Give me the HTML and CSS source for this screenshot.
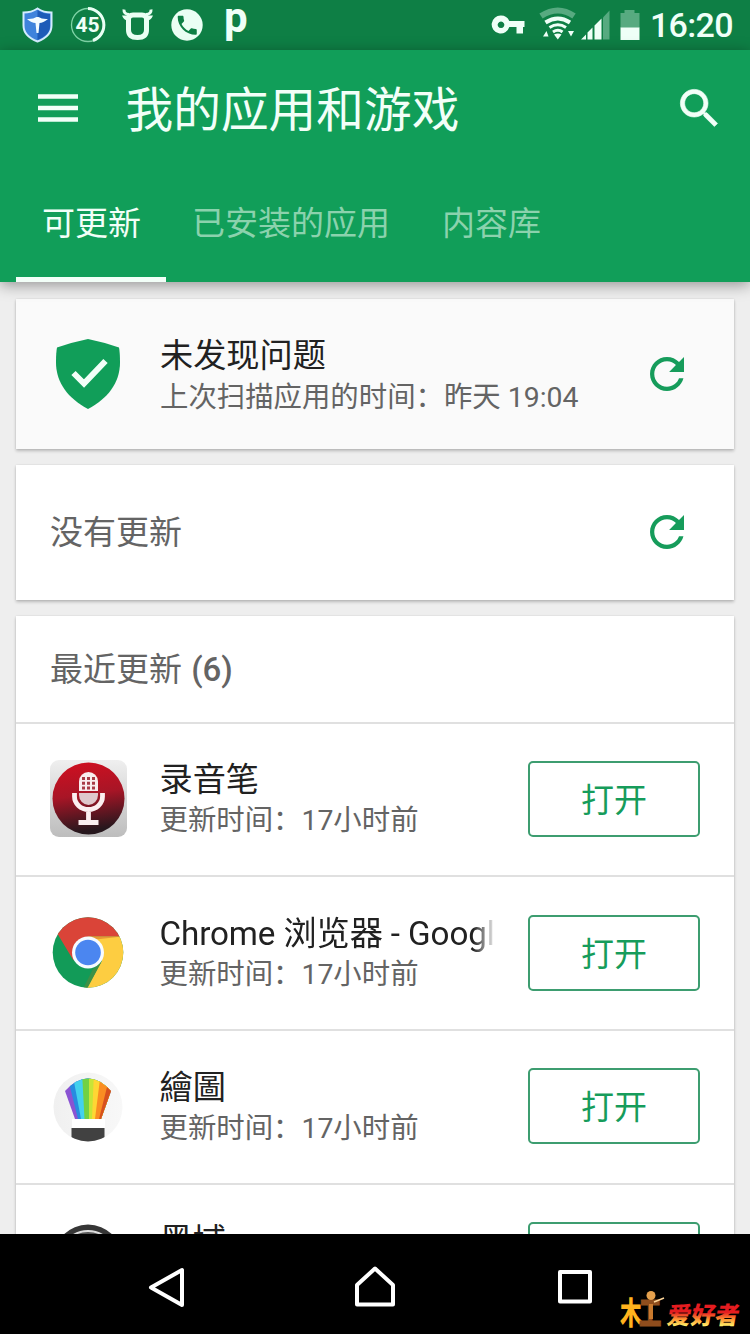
FILE: index.html
```html
<!DOCTYPE html>
<html lang="zh-CN">
<head>
<meta charset="utf-8">
<title>我的应用和游戏</title>
<link rel="stylesheet" href="styles.css">
</head>
<body>
<div class="screen">
  <div class="status">
    <svg width="46" height="50" viewBox="16 0 46 50">
      <path d="M37.500 8.500q6 4 14 4v13c0 8-6 13-14 16c-8-3-14-8-14-16v-13q8 0 14-4z" fill="#3f83dc" stroke="#d3ecff" stroke-width="2"/>
      <path d="M37.500 10v30c7-3 12.500-7 12.500-14v-12q-7 0-12.500-4z" fill="#1d5bb8"/>
      <path d="M27 19q6 .5 9.500-2h2q3.500 2.500 9.500 2q-5 4-8.500 4l-1 10h-2l-1-10q-4 0-8.500-4z" fill="#f2fbff"/>
    </svg>
    <svg width="50" height="50" viewBox="62 0 50 50">
      <circle cx="88" cy="25" r="16.500" fill="none" stroke="#7fd3a6" stroke-width="1.300"/>
      <path d="M88 8.500a16.500 16.500 0 0 1 5 32" fill="none" stroke="#e9fff4" stroke-width="3"/>
      <text x="87.500" y="32" text-anchor="middle" class="badge-num">45</text>
    </svg>
    <svg width="50" height="50" viewBox="112 0 50 50">
      <path d="M133 15h9q4.500 0 4.500 4v11c0 5-3 7.500-9 7.500s-9-2.500-9-7.500v-11q0-4 4.500-4z" fill="none" stroke="#eafff4" stroke-width="5"/>
      <path d="M124 9.500q-.5 4.500 5 5M151 9.500q.5 4.500-5 5" fill="none" stroke="#eafff4" stroke-width="3"/>
      <path d="M122 15.500l6 0v5q-4 0-6-5zM153 15.500l-6 0v5q4 0 6-5z" fill="#eafff4"/>
    </svg>
    <svg width="50" height="50" viewBox="162 0 50 50">
      <circle cx="187" cy="25" r="15.700" fill="#eafff4"/>
      <g transform="translate(174.500 12.500) scale(1.060)"><path d="M6.620 10.790c1.440 2.830 3.760 5.140 6.590 6.590l2.200-2.200c.27-.27.670-.36 1.020-.24 1.120.37 2.330.57 3.570.57.550 0 1 .45 1 1V20c0 .55-.45 1-1 1-9.390 0-17-7.610-17-17 0-.55.450-1 1-1h3.500c.55 0 1 .45 1 1 0 1.250.2 2.450.57 3.570.11.350.03.740-.25 1.020z" fill="#0e7f45"/></g>
    </svg>
    <svg width="44" height="50" viewBox="212 0 44 50"><text x="224" y="32" class="p-mark">p</text></svg>
    <svg class="signals" width="162" height="50" viewBox="486 0 162 50">
      <path fill-rule="evenodd" d="M501 15.500a9 9 0 0 1 8.300 5.500h15.200v6h-1.500v6.500h-6.500v-6.500h-7.200a9 9 0 1 1-8.300-11.500zM501 21.500a3.300 3.300 0 1 0 .01 0z" fill="#effff7"/>
      <g fill="none" stroke="#effff7">
        <path d="M541 16q17-11 33 0" stroke="#57aa80" stroke-width="6"/>
        <path d="M545.500 22.500q12.500-8 24.500 0" stroke-width="4"/>
        <path d="M549.500 27.500q8.500-5.500 16.500 0" stroke-width="3"/>
        <path d="M553 32q5-3.500 9.500 0" stroke-width="3"/>
      </g>
      <path d="M554 34.500q4-2 7.500 0l-3.700 5zM543 36.500l3.500-5.500 2 5.500zM568 31h6l-3 5.500z" fill="#effff7"/>
      <path d="M581 39.500l5-5v5zM587.500 39.500v-7l5-5v12zM594.500 39.500v-14l7-7v21z" fill="#effff7"/>
      <path d="M603 39.500h6.500v-29l-6.500 7z" fill="#57aa80"/>
      <path d="M620.500 28v-15h4v-3h10v3h5v15z" fill="#57aa80"/><path d="M620.500 27.500h19v12.500h-19z" fill="#effff7"/>
    </svg>
    <span class="clock">16:20</span>
  </div>
  <header class="header">
    <div class="bar">
      <svg class="menu" width="40" height="28" viewBox="0 0 40 28"><path d="M0 2.500h40M0 14h40M0 25.500h40" stroke="#f2fff8" stroke-width="4.500"/></svg>
      <h1 class="title">我的应用和游戏</h1>
      <svg width="51" height="51" viewBox="0 0 24 24"><path fill="#f2fff8" stroke="#f2fff8" stroke-width=".3" d="M15.500 14h-.79l-.28-.27C15.410 12.590 16 11.110 16 9.500 16 5.910 13.090 3 9.500 3S3 5.910 3 9.500 5.910 16 9.500 16c1.610 0 3.090-.59 4.230-1.570l.27.28v.79l5 4.990L20.490 19l-4.990-5zm-6 0C7.010 14 5 11.990 5 9.500S7.010 5 9.500 5 14 7.010 14 9.500 11.990 14 9.500 14z"/></svg>
    </div>
    <nav class="tabs">
      <span class="tab tab-active">可更新</span><span class="tab">已安装的应用</span><span class="tab">内容库</span>
    </nav>
  </header>
  <main class="content">
    <section class="card scan">
      <svg class="shield" width="64" height="70" viewBox="0 0 64 70"><path d="M32 0q15 3 31 8.500q1 5 1 15c0 20-12 36-32 46.500c-20-10.500-32-26.500-32-46.500q0-10 1-15q16-5.500 31-8.500z" fill="#119e59"/><path d="M17.500 34l10.500 10.500L49.500 22" fill="none" stroke="#f2fff8" stroke-width="6"/></svg>
      <div class="info">
        <div class="name">未发现问题</div>
        <div class="sub">上次扫描应用的时间：昨天 19:04</div>
      </div>
      <svg class="refresh" width="34" height="34" viewBox="4 4 16 16"><path fill="#169c5b" d="M17.650 6.350C16.200 4.900 14.210 4 12 4c-4.420 0-7.990 3.580-7.990 8s3.570 8 7.990 8c3.730 0 6.840-2.550 7.730-6h-2.080c-.82 2.330-3.040 4-5.650 4-3.310 0-6-2.690-6-6s2.690-6 6-6c1.660 0 3.140.69 4.220 1.780L13 11h7V4l-2.350 2.350z"/></svg>
    </section>
    <section class="card none">
      <div class="label">没有更新</div>
      <svg class="refresh" width="34" height="34" viewBox="4 4 16 16"><path fill="#169c5b" d="M17.650 6.350C16.200 4.900 14.210 4 12 4c-4.420 0-7.990 3.580-7.990 8s3.570 8 7.990 8c3.730 0 6.840-2.550 7.730-6h-2.080c-.82 2.330-3.040 4-5.650 4-3.310 0-6-2.690-6-6s2.690-6 6-6c1.660 0 3.140.69 4.220 1.780L13 11h7V4l-2.350 2.350z"/></svg>
    </section>
    <section class="card recent">
      <div class="heading label">最近更新 <span class="count">(6)</span></div>
      <div class="app">
        <svg class="icon" width="77" height="77" viewBox="0 0 77 77">
          <defs>
            <linearGradient id="plate" x2="0" y2="1"><stop stop-color="#efefef"/><stop offset="1" stop-color="#bdbdbd"/></linearGradient>
            <linearGradient id="disc" x2="0.150" y2="1"><stop stop-color="#d20f20"/><stop offset=".5" stop-color="#a81526"/><stop offset="1" stop-color="#26171d"/></linearGradient>
          </defs>
          <rect width="77" height="77" rx="9" fill="url(#plate)"/>
          <circle cx="38.500" cy="38.500" r="36" fill="url(#disc)"/>
          <path d="M29 31v-9.500a9.500 9.500 0 0 1 19 0v9.500z" fill="#f9ecee"/>
          <path d="M29 33h19v2a9.500 10 0 0 1-19 0z" fill="#dfc7cb"/>
          <path d="M24.500 33v3.500a14 13 0 0 0 28 0v-3.500M38.500 50v12" fill="none" stroke="#fbeff0" stroke-width="4.800"/>
          <path d="M28.500 60h20v5h-20z" fill="#fbeff0"/>
          <path d="M33.500 17v12.500M38.500 17v12.500M43.500 17v12.500" stroke="#a83a46" stroke-width="3" stroke-dasharray="3 1.800"/>
        </svg>
        <div class="info"><div class="name">录音笔</div><div class="sub">更新时间：17小时前</div></div>
        <button class="open">打开</button>
      </div>
      <div class="app">
        <svg class="icon" width="77" height="77" viewBox="0 0 77 77">
          <clipPath id="round"><circle cx="38" cy="38.500" r="35.300"/></clipPath>
          <g clip-path="url(#round)">
            <path d="M0 0h77v77h-77z" fill="#129b58"/>
            <path d="M38 22.500h39v55h-42l17-31z" fill="#fdcd41"/>
            <path d="M52.200 46.500l-15.500 29h-4l10-20z" fill="#3d9146"/>
            <path d="M0 0h77v22.500h-39l-14.500 24-18-30z" fill="#da4438"/>
            <path d="M38 22.500h34l-26 3z" fill="#e79a35"/>
          </g>
          <circle cx="38" cy="38.500" r="16" fill="#f7fbff"/><circle cx="38" cy="38.500" r="12.800" fill="#4b86f0"/>
        </svg>
        <div class="info"><div class="name name-fade">Chrome 浏览器 - Googl</div><div class="sub">更新时间：17小时前</div></div>
        <button class="open">打开</button>
      </div>
      <div class="app">
        <svg class="icon" width="77" height="77" viewBox="0 -3 77 77">
          <defs><linearGradient id="pale"><stop stop-color="#f0f0f0"/><stop offset="1" stop-color="#f8f8f8"/></linearGradient>
          <clipPath id="fan"><path d="M15 20Q38-5 61 20l-10 28h-26z"/></clipPath>
          <clipPath id="pot"><circle cx="38" cy="36" r="34.500"/></clipPath></defs>
          <circle cx="38" cy="36" r="34.500" fill="url(#pale)"/>
          <g clip-path="url(#fan)">
            <path d="M13 0h50v48h-50z" fill="#8a53d2"/>
            <path d="M17 4L28 48h30V0h-40z" fill="#288be0"/>
            <path d="M22 0L31 48h30V0z" fill="#43d1ed"/>
            <path d="M32 0L34.500 48H60V0z" fill="#71d143"/>
            <path d="M39 0V48H60V0z" fill="#c8e437"/>
            <path d="M44 0L42 48H60V0z" fill="#ffd634"/>
            <path d="M51 0L45 48H62V0z" fill="#fa8d22"/>
            <path d="M59 8L49 48H64V0z" fill="#d7501e"/>
          </g>
          <path d="M22 48h33v9h-33z" fill="#fff"/>
          <path clip-path="url(#pot)" d="M21.500 57h33v14h-33z" fill="#414141"/>
        </svg>
        <div class="info"><div class="name">繪圖</div><div class="sub">更新时间：17小时前</div></div>
        <button class="open">打开</button>
      </div>
      <div class="app">
        <svg class="icon" width="77" height="77" viewBox="0 0 77 77"><circle cx="38" cy="38" r="34.500" fill="#363636"/><circle cx="38" cy="38" r="28" fill="#555" stroke="#ddd" stroke-width="2"/></svg>
        <div class="info"><div class="name">黑域</div><div class="sub">更新时间：17小时前</div></div>
        <button class="open">打开</button>
      </div>
    </section>
  </main>
  <footer class="nav">
    <svg width="40" height="44" viewBox="0 0 40 44"><path d="M35 5v35L4 22.500z" fill="none" stroke="#fff" stroke-width="4" stroke-linejoin="round"/></svg>
    <svg class="home" width="44" height="44" viewBox="0 0 44 44"><path d="M22 3.500L40 20v19.500H4V20z" fill="none" stroke="#fff" stroke-width="4" stroke-linejoin="round"/></svg>
    <svg width="40" height="44" viewBox="0 0 40 44"><path d="M5 7h30v29.500H5z" fill="none" stroke="#fff" stroke-width="4" stroke-linejoin="round"/></svg>
  </footer>
  <svg class="mark" width="130" height="44" viewBox="0 0 130 44">
    <defs><linearGradient id="fire" gradientUnits="userSpaceOnUse" x1="0" y1="-19" x2="0" y2="2"><stop offset=".35" stop-color="#e51c20"/><stop offset=".7" stop-color="#ff9a35"/><stop offset="1" stop-color="#fff36a"/></linearGradient></defs>
    <text class="mark-wood" transform="translate(0 34) scale(.7 1)" fill="#ffb31d">木</text>
    <text class="mark-wood" transform="translate(19 34.500) scale(.72 1.080)" fill="#8f4d1d" stroke="#8f4d1d">工</text>
    <circle cx="31" cy="5.500" r="4.500" fill="#e4a04d"/><path d="M29 14h4v15h-4z" fill="#c9792d"/><path d="M34 12l10-4" stroke="#ffd79a" stroke-width="1.500"/>
    <text class="mark-text" transform="translate(46 34) skewX(-10)" fill="url(#fire)">爱好者</text>
  </svg>
</div>
</body>
</html>
```
FILE: styles.css
```css
* { box-sizing: border-box; }
body { margin: 0; font-family: Roboto, "Noto Sans CJK SC", sans-serif; }
svg { display: block; flex: none; }
.screen { position: relative; width: 750px; height: 1334px; display: flex; flex-direction: column; overflow: hidden; background: #eee; }
.status { flex: none; height: 50px; padding-left: 16px; display: flex; background: #0e7f45; }
.signals { margin-left: 230px; }
.clock { margin-left: 2px; font-size: 34px; font-weight: 500; line-height: 51px; color: #f0fff8; letter-spacing: -0.7px; }
.badge-num { font: bold 21px Roboto, sans-serif; fill: #effff7; }
.p-mark { font: bold 42px Roboto, sans-serif; fill: #effff7; }
.header { flex: none; position: relative; z-index: 1; height: 232px; background: #119e59; box-shadow: 0 3px 14px rgba(0, 0, 0, .38); }
.bar { height: 116px; display: flex; align-items: center; padding: 0 25px 0 38px; }
.title { flex: 1; margin: 0 0 0 47.500px; padding-top: 6px; font-size: 47.7px; font-weight: 400; line-height: 60px; color: #f2fff8; }
.tabs { height: 116px; padding-left: 16px; display: flex; }
.tab { padding: 0 26px; height: 116px; font-size: 33px; line-height: 116px; color: #8bd2ad; white-space: nowrap; }
.tab-active { width: 150px; color: #f2fff8; border-bottom: 5px solid #f2fff8; }
.content { flex: 1; min-height: 0; overflow: hidden; padding: 16.5px 16.5px 0 16px; display: flex; flex-direction: column; gap: 16px; }
.card { flex: none; background: #fff; box-shadow: 0 2px 3px rgba(0, 0, 0, .22), 0 0 2px rgba(0, 0, 0, .1); }
.scan { height: 150.500px; padding: 0 50px 0 40px; display: flex; align-items: center; background: #fafafa; }
.none { height: 134.500px; padding: 0 50px 0 34px; display: flex; align-items: center; }
.refresh { margin-left: auto; }
.info { width: 333px; padding-top: 3px; white-space: nowrap; }
.scan .info { width: 430px; margin-left: 40px; padding-top: 7px; }
.name { font-size: 33.200px; line-height: 42px; color: #212121; }
.sub { font-size: 28.400px; line-height: 40px; color: #646464; }
.scan .sub { line-height: 42px; }
.name-fade { overflow: hidden; letter-spacing: -0.100px; mask-image: linear-gradient(90deg, #000 94%, transparent 101%); }
.label { padding-top: 2px; font-size: 33px; line-height: 40px; color: #646464; }
.heading { height: 106px; padding: 34px 34px 0; }
.count { margin-left: 1px; font-weight: 500; }
.app { height: 153.700px; padding: 0 33.500px 1px 34px; display: flex; align-items: center; border-top: 2px solid #e0e0e0; }
.app .info { margin-left: 32.500px; }
.open { margin: 0 0 0 auto; width: 172px; height: 76px; padding: 3px 0 0; border: 2px solid #3d9d70; border-radius: 5px; background: #fff; color: #169c5b; font: 33px/70px Roboto, "Noto Sans CJK SC", sans-serif; }
.nav { flex: none; position: relative; height: 100px; padding: 31px 155px 0 147px; display: flex; justify-content: space-between; background: #000; }
.home { margin-left: 8px; }
.mark { position: absolute; left: 620px; top: 1290px; }
.mark-wood { font: 900 31px "Noto Sans CJK SC", sans-serif; }
.mark-text { font: 900 24px "Noto Sans CJK SC", sans-serif; }
```
